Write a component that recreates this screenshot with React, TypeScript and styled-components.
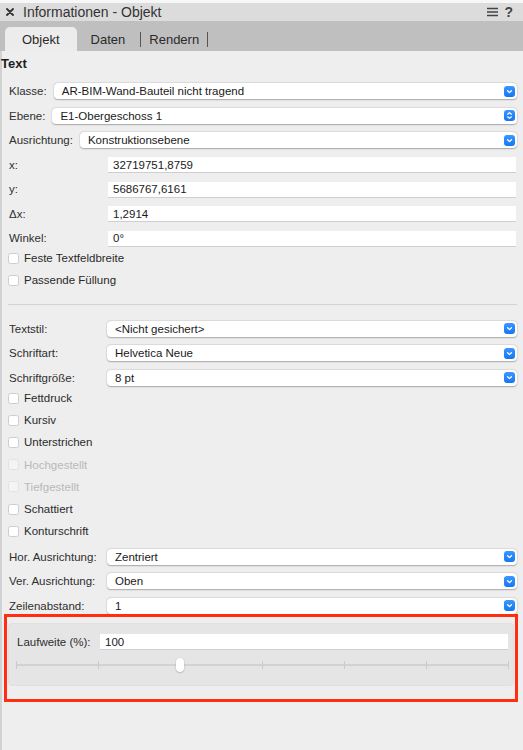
import React from "react";
import styled, { createGlobalStyle } from "styled-components";

const Global = createGlobalStyle`
  html, body { margin: 0; padding: 0; background: #eeeeee; }
  body { font-family: "Liberation Sans", Arial, sans-serif; color: #262626; }
  * { box-sizing: border-box; }
`;

const Panel = styled.div`
  width: 523px;
  min-height: 750px;
  background: #eeeeee;
  border-top: 3px solid #f7f7f7;
  display: flex;
  flex-direction: column;
`;

const TitleBar = styled.div`
  height: 18px;
  background: #dcdcdc;
  display: flex;
  align-items: center;
  padding: 0 10px 0 6px;
  font-size: 14px;
  color: #333;
`;

const TitleText = styled.span`
  margin-left: 9px;
  flex: 1;
`;

const TitleIcons = styled.div`
  display: flex;
  align-items: center;
  gap: 6px;
  font-weight: bold;
  font-size: 14px;
  color: #444;
`;

const TabBar = styled.div`
  height: 30px;
  background: #bfbfbf;
  display: flex;
  align-items: flex-end;
  padding-left: 5px;
`;

const Tab = styled.div<{ $active?: boolean; $pl: number; $pr: number }>`
  height: 24px;
  display: flex;
  align-items: center;
  font-size: 13px;
  color: #2a2a2a;
  padding: 0 ${(p) => p.$pr}px 0 ${(p) => p.$pl}px;
  position: relative;
  background: ${(p) => (p.$active ? "#ececec" : "transparent")};
  border-radius: ${(p) => (p.$active ? "5px 5px 0 0" : "0")};
  &::after {
    content: "";
    display: ${(p) => (p.$active ? "none" : "block")};
    position: absolute;
    right: 0;
    top: 5px;
    width: 1px;
    height: 15px;
    background: #555;
  }
`;

const Content = styled.div`
  flex: 1;
  border-left: 2px solid #d2d2d2;
  padding: 0 6px 0 6px;
  display: flex;
  flex-direction: column;
`;

const SectionTitle = styled.div`
  font-weight: bold;
  font-size: 13px;
  height: 32px;
  padding-top: 5px;
  line-height: 15px;
  margin-left: -7px;
  color: #1e1e1e;
`;

const FieldGroup = styled.div<{ $mt?: number }>`
  display: flex;
  flex-direction: column;
  gap: 8.5px;
  margin-top: ${(p) => p.$mt ?? 0}px;
`;

const FieldRow = styled.div`
  height: 16px;
  display: flex;
  align-items: center;
  font-size: 11.5px;
`;

const Label = styled.span<{ $w?: number }>`
  flex: none;
  width: ${(p) => (p.$w ? `${p.$w}px` : "auto")};
  margin-right: ${(p) => (p.$w ? 0 : 7)}px;
  padding-left: 1px;
  color: #2e2e2e;
  white-space: nowrap;
`;

const SelectBox = styled.div`
  flex: 1;
  height: 16px;
  background: #fff;
  border-radius: 4px;
  box-shadow: 0 0.5px 1.5px rgba(0, 0, 0, 0.28), 0 0 0 0.5px rgba(0, 0, 0, 0.06);
  display: flex;
  align-items: center;
  padding: 0 2px 0 8px;
  color: #1a1a1a;
`;

const SelectText = styled.span`
  flex: 1;
  white-space: nowrap;
`;

const BlueBtn = styled.span`
  width: 11px;
  height: 11px;
  border-radius: 3px;
  background: linear-gradient(#3b97ff, #1577f2);
  display: flex;
  align-items: center;
  justify-content: center;
`;

const InputBox = styled.div`
  flex: 1;
  height: 15px;
  background: #fff;
  box-shadow: 0 1px 0 #cfcfcf;
  display: flex;
  align-items: center;
  padding-left: 5px;
  margin-right: 1px;
  color: #1a1a1a;
`;

const CheckGroup = styled.div`
  display: flex;
  flex-direction: column;
  margin-top: 1px;
`;

const CheckRow = styled.div<{ $disabled?: boolean }>`
  height: 22.2px;
  display: flex;
  align-items: center;
  font-size: 11.5px;
  color: ${(p) => (p.$disabled ? "#b9b9b9" : "#2a2a2a")};
`;

const CheckBox = styled.span<{ $disabled?: boolean }>`
  width: 11px;
  height: 11px;
  border-radius: 2.5px;
  background: ${(p) => (p.$disabled ? "#f4f4f4" : "#fff")};
  border: 1px solid ${(p) => (p.$disabled ? "#e2e2e2" : "#cdcdcd")};
  margin-right: 5px;
  flex: none;
`;

const Divider = styled.div`
  height: 1px;
  background: #d3d3d3;
  margin: 13px 0 15.6px 0;
`;

const Highlight = styled.div`
  margin: 0 -1px 0 -4px;
  border: 3px solid #ff2d12;
  padding: 6px 1px 13px 1px;
`;

const GroupBox = styled.div`
  background: #e5e5e5;
  border-radius: 4px;
  border: 1px solid #e0e0e0;
  padding: 10px 4px 12px 7px;
  display: flex;
  flex-direction: column;
`;

const SliderWrap = styled.div`
  position: relative;
  height: 16px;
  margin-top: 7px;
  margin-right: 1px;
`;

const Track = styled.div`
  position: absolute;
  left: 0;
  right: 0;
  top: 7px;
  height: 2px;
  background: #d2d2d2;
`;

const Tick = styled.div`
  position: absolute;
  top: 4px;
  width: 1px;
  height: 8px;
  background: #cbcbcb;
`;

const Thumb = styled.div`
  position: absolute;
  top: 1px;
  width: 8px;
  height: 14px;
  margin-left: -4px;
  border-radius: 4px;
  background: #fff;
  box-shadow: 0 0.5px 1.5px rgba(0, 0, 0, 0.35);
`;

const Chevron = ({ updown }: { updown?: boolean }) => (
  <svg width="11" height="11" viewBox="0 0 11 11">
    {updown ? (
      <>
        <path d="M3.6 4.2 L5.5 2.6 L7.4 4.2" stroke="#fff" strokeWidth="1.2" fill="none" strokeLinecap="round" strokeLinejoin="round" />
        <path d="M3.6 6.8 L5.5 8.4 L7.4 6.8" stroke="#fff" strokeWidth="1.2" fill="none" strokeLinecap="round" strokeLinejoin="round" />
      </>
    ) : (
      <path d="M3.6 4.8 L5.5 6.6 L7.4 4.8" stroke="#fff" strokeWidth="1.3" fill="none" strokeLinecap="round" strokeLinejoin="round" />
    )}
  </svg>
);

const Select = ({ value, updown }: { value: string; updown?: boolean }) => (
  <SelectBox>
    <SelectText>{value}</SelectText>
    <BlueBtn>
      <Chevron updown={updown} />
    </BlueBtn>
  </SelectBox>
);

const Check = ({ label, disabled }: { label: string; disabled?: boolean }) => (
  <CheckRow $disabled={disabled}>
    <CheckBox $disabled={disabled} />
    {label}
  </CheckRow>
);

const ticks = [0, 1, 2, 3, 4, 5, 6];

export default function App() {
  return (
    <>
      <Global />
      <Panel>
        <TitleBar>
          <svg width="8" height="8" viewBox="0 0 8 8">
            <path d="M1 1 L7 7 M7 1 L1 7" stroke="#333" strokeWidth="1.8" strokeLinecap="round" />
          </svg>
          <TitleText>Informationen - Objekt</TitleText>
          <TitleIcons>
            <svg width="11" height="10" viewBox="0 0 11 10">
              <path d="M0 1.5 H11 M0 5 H11 M0 8.5 H11" stroke="#444" strokeWidth="1.6" />
            </svg>
            <span>?</span>
          </TitleIcons>
        </TitleBar>
        <TabBar>
          <Tab $active $pl={17} $pr={17}>Objekt</Tab>
          <Tab $pl={14} $pr={16}>Daten</Tab>
          <Tab $pl={8} $pr={9}>Rendern</Tab>
        </TabBar>
        <Content>
          <SectionTitle>Text</SectionTitle>
          <FieldGroup>
            <FieldRow>
              <Label>Klasse:</Label>
              <Select value="AR-BIM-Wand-Bauteil nicht tragend" />
            </FieldRow>
            <FieldRow>
              <Label>Ebene:</Label>
              <Select value="E1-Obergeschoss 1" updown />
            </FieldRow>
            <FieldRow>
              <Label>Ausrichtung:</Label>
              <Select value="Konstruktionsebene" />
            </FieldRow>
            <FieldRow>
              <Label $w={100}>x:</Label>
              <InputBox>32719751,8759</InputBox>
            </FieldRow>
            <FieldRow>
              <Label $w={100}>y:</Label>
              <InputBox>5686767,6161</InputBox>
            </FieldRow>
            <FieldRow>
              <Label $w={100}>Δx:</Label>
              <InputBox>1,2914</InputBox>
            </FieldRow>
            <FieldRow>
              <Label $w={100}>Winkel:</Label>
              <InputBox>0°</InputBox>
            </FieldRow>
          </FieldGroup>
          <CheckGroup>
            <Check label="Feste Textfeldbreite" />
            <Check label="Passende Füllung" />
          </CheckGroup>
          <Divider />
          <FieldGroup>
            <FieldRow>
              <Label $w={99}>Textstil:</Label>
              <Select value="<Nicht gesichert>" />
            </FieldRow>
            <FieldRow>
              <Label $w={99}>Schriftart:</Label>
              <Select value="Helvetica Neue" />
            </FieldRow>
            <FieldRow>
              <Label $w={99}>Schriftgröße:</Label>
              <Select value="8 pt" />
            </FieldRow>
          </FieldGroup>
          <CheckGroup>
            <Check label="Fettdruck" />
            <Check label="Kursiv" />
            <Check label="Unterstrichen" />
            <Check label="Hochgestellt" disabled />
            <Check label="Tiefgestellt" disabled />
            <Check label="Schattiert" />
            <Check label="Konturschrift" />
          </CheckGroup>
          <FieldGroup $mt={6.6}>
            <FieldRow>
              <Label $w={99}>Hor. Ausrichtung:</Label>
              <Select value="Zentriert" />
            </FieldRow>
            <FieldRow>
              <Label $w={99}>Ver. Ausrichtung:</Label>
              <Select value="Oben" />
            </FieldRow>
            <FieldRow>
              <Label $w={99}>Zeilenabstand:</Label>
              <Select value="1" />
            </FieldRow>
          </FieldGroup>
          <Highlight>
            <GroupBox>
              <FieldRow>
                <Label $w={84}>Laufweite (%):</Label>
                <InputBox>100</InputBox>
              </FieldRow>
              <SliderWrap>
                <Track />
                {ticks.map((t) => (
                  <Tick key={t} style={{ left: `${(t / 6) * 100}%` }} />
                ))}
                <Thumb style={{ left: `${(2 / 6) * 100}%` }} />
              </SliderWrap>
            </GroupBox>
          </Highlight>
        </Content>
      </Panel>
    </>
  );
}
